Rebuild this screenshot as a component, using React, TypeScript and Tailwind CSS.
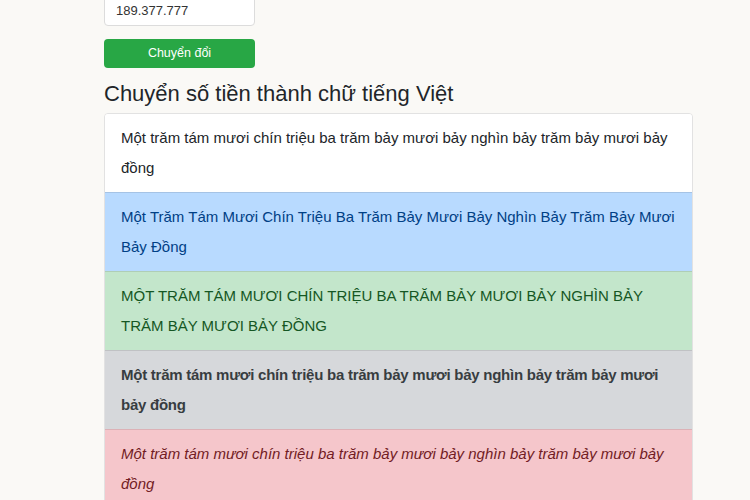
export default function App() {
  const text = "Một trăm tám mươi chín triệu ba trăm bảy mươi bảy nghìn bảy trăm bảy mươi bảy đồng"
  const title = "Một Trăm Tám Mươi Chín Triệu Ba Trăm Bảy Mươi Bảy Nghìn Bảy Trăm Bảy Mươi Bảy Đồng"

  const items = [
    { label: text, cls: "bg-white text-[#212529]" },
    { label: title, cls: "bg-[#b8daff] text-[#004085]" },
    { label: text.toUpperCase(), cls: "bg-[#c3e6cb] text-[#155724]" },
    { label: text, cls: "bg-[#d6d8db] text-[#383d41] font-bold tracking-[-0.25px]" },
    { label: text, cls: "bg-[#f5c6cb] text-[#721c24] italic" },
  ]

  return (
    <div className="min-h-[500px] bg-[#faf9f6] font-['Liberation_Sans',Arial,sans-serif] text-[#212529] overflow-hidden">
      <div className="ml-[104px] w-[589px]">
        <div className="mt-[-5px] w-[151px] h-[31px] border border-[#dcdcdc] rounded-[4px] bg-white flex items-center px-[11px] text-[13px] text-[#333]">
          189.377.777
        </div>
        <button className="mt-[13px] w-[151px] h-[29px] rounded-[4px] bg-[#28a745] text-white text-[12.5px] flex items-center justify-center">
          Chuyển đổi
        </button>
        <h2 className="mt-[10px] text-[22px] leading-[32px] font-normal">Chuyển số tiền thành chữ tiếng Việt</h2>
        <ul className="mt-[3px] rounded-[4px] overflow-hidden border border-[#e2e2e2]">
          {items.map((it, i) => (
            <li
              key={i}
              className={`px-[16px] py-[9px] text-[15px] leading-[30px] ${i > 0 ? "border-t border-black/10" : ""} ${it.cls}`}
            >
              {it.label}
            </li>
          ))}
        </ul>
      </div>
    </div>
  )
}
